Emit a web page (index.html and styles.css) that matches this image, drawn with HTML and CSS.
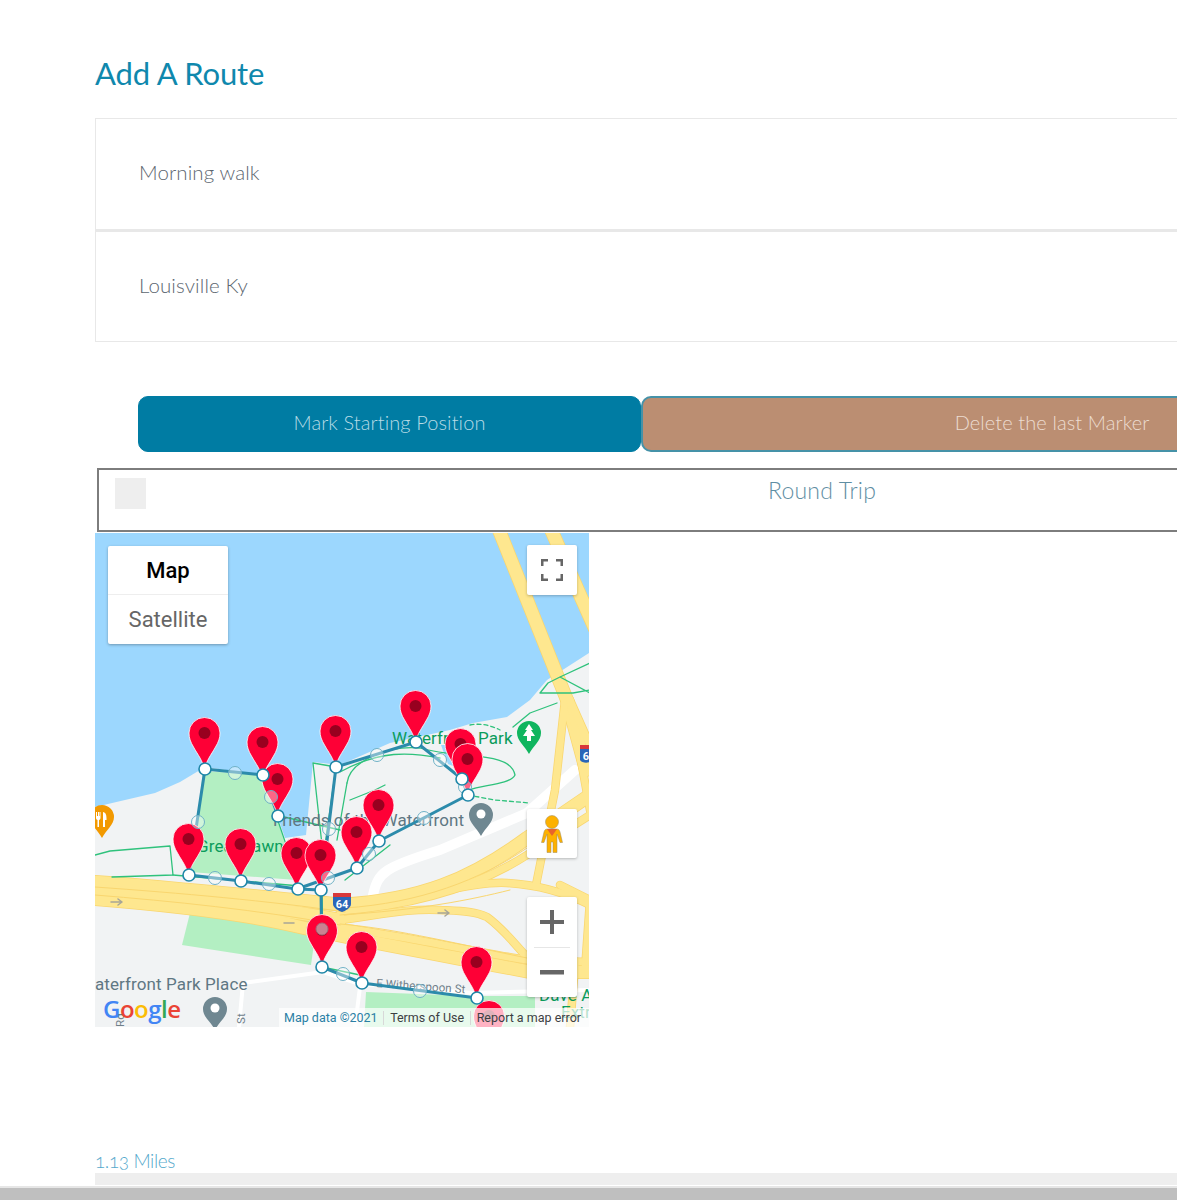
FILE: index.html
```html
<!DOCTYPE html>
<html lang="en">
<head>
<meta charset="utf-8">
<title>Add A Route</title>
<link rel="stylesheet" href="styles.css">
</head>
<body>
<main class="page">
  <h1 class="title">Add A Route</h1>
  <div class="fields">
    <div class="field">Morning walk</div>
    <div class="field">Louisville Ky</div>
  </div>
  <div class="actions">
    <button class="btn btn-start">Mark Starting Position</button>
    <button class="btn btn-delete">Delete the last Marker</button>
  </div>
  <div class="round">
    <span class="check"></span>
    <span class="round-label">Round Trip</span>
  </div>
  <div class="map">
    <svg class="map-canvas" viewBox="95 533 494 494" width="494" height="494">
      <defs>
        <g id="r13">
          <path d="M497 525L567 700L586 770"/>
          <path d="M549 525L600 640"/>
          <path d="M95 882C180 888 270 898 345 905"/>
          <path d="M95 891C170 897 260 905 340 920"/>
          <path d="M95 899C170 905 250 915 300 927C380 945 470 960 530 972L595 972"/>
          <path d="M340 905C420 900 470 880 527 838L590 795"/>
        </g>
        <g id="r7">
          <path d="M565 700L555 790L536 885"/>
          <path d="M570 700L590 810"/>
          <path d="M570 700L590 745"/>
          <path d="M340 911C420 905 480 885 527 855L590 815"/>
          <path d="M380 905C400 900 420 895 440 892C470 885 490 882 507 883C540 885 570 895 590 905"/>
          <path d="M340 920C380 915 410 908 440 910C460 911 475 911 487 917C505 930 515 945 527 957"/>
          <path d="M340 927C370 932 395 936 417 940C460 948 495 955 527 960L590 962"/>
          <path d="M560 885L590 900L585 970"/>
          <path d="M575 965L570 1027"/>
        </g>
        <path id="pin" d="M0 0C-2-10-6-14-11-23C-14-28-15.500-32-15.500-37A15.500 15.500 0 1 1 15.500-37C15.500-32 14-28 11-23C6-14 2-10 0 0Z"/>
        <g id="marker">
          <use href="#pin" class="pin-shape"/>
          <circle cy="-37" r="6" class="pin-dot"/>
        </g>
      </defs>

      <rect x="95" y="533" width="494" height="494" class="land"/>
      <path class="water" d="M95 533H589V653L547 680L530 700L507 717L473 723L450 730L390 743L340 765L313 762L306 835L285 838L272 800L262 775L205 767L180 782L155 793L95 807Z"/>
      <path class="water" d="M441 745L450 745L458 768L448 764Z"/>

      <path class="park" d="M203 771L262 775L275 812L296 880L190 872L197 822Z"/>
      <path class="park" d="M192 905L182 945L311 965L318 915Z"/>
      <path class="park" d="M366 992L472 996L535 996V1027H364Z"/>

      <path class="street-wide" d="M373 895C378 872 385 867 440 850L527 813L575 770"/>
      <path class="street" d="M243 983L323 972L360 984L473 993L589 990"/>
      <path class="street" d="M243 983L239 1027"/>
      <path class="street" d="M360 987L355 1027"/>

      <use href="#r13" class="edge-13"/>
      <use href="#r7" class="edge-7"/>
      <use href="#r13" class="road-13"/>
      <use href="#r7" class="road-7"/>
      <path class="road-line" d="M95 887C180 893 270 901 345 912M95 895C170 901 260 910 340 925M345 908C420 903 480 880 527 848M340 915C420 910 470 900 510 890M340 924C390 928 440 940 527 958"/>
      <path class="arrow" d="M111 902H121M118 899L122 902L118 905M438 913H448M445 910L449 913L445 916M284 923H294"/>

      <path class="trail" d="M95 855L110 851L170 846L173 875L112 877"/>
      <path class="trail" d="M173 875L300 886"/>
      <path class="trail" d="M275 812L298 880"/>
      <path class="trail" d="M313 763L336 767L325 845M313 763L322 845M347 783L337 840"/>
      <path class="trail" d="M347 783C350 760 390 745 420 748C460 760 510 750 515 775C510 785 480 785 470 790"/>
      <path class="trail" d="M340 772C380 750 410 752 440 758"/>
      <path class="trail" d="M513 727L530 713L557 703M540 693H573L590 690M540 693L548 683L560 677L590 693M560 677L590 663"/>
      <path class="trail" d="M322 890L323 967M322 967L360 975"/>
      <path class="trail-dash" d="M468 795L495 800L530 803"/>
      <path class="trail-dash" d="M470 725C480 723 490 725 500 730"/>
      <path class="trail" d="M345 880L390 845M280 816L340 830M350 800L375 790L385 785"/>

      <text x="392" y="744" class="label-green">Waterfront Park</text>
      <text x="197" y="852" class="label-green">Great Lawn</text>
      <text x="273" y="826" class="label-gray">Friends of the Waterfront</text>
      <text x="95" y="990" class="label-gray">aterfront Park Place</text>
      <text x="376" y="987" transform="rotate(4 376 987)" class="label-small">E Witherspoon St</text>
      <text x="539" y="1001" class="label-green">Dave A</text>
      <text x="561" y="1018" class="label-green">Extr</text>
      <text x="245" y="1024" transform="rotate(-90 245 1024)" class="label-small">St</text>
      <text x="124" y="1027" transform="rotate(-90 124 1027)" class="label-small">Rd</text>

      <g>
        <path d="M333 895H351V904C351 908 345 911 342 912C339 911 333 908 333 904Z" class="shield-blue"/>
        <path d="M333 893H351V897H333Z" class="shield-red"/>
        <text x="342" y="908" class="shield-text">64</text>
      </g>
      <g>
        <path d="M580 747H592V760C592 763 582 764 580 760Z" class="shield-blue"/>
        <path d="M580 745H592V749H580Z" class="shield-red"/>
        <text x="586" y="760" class="shield-text">6</text>
      </g>

      <path class="poi-green" d="M529 721A12 12 0 0 1 541 733C541 741 533 746 529 754C525 746 517 741 517 733A12 12 0 0 1 529 721Z"/>
      <path class="poi-icon" d="M529 724L533 730H531L535 736H531V741H527V736H523L527 730H525Z"/>
      <path class="poi-gray" d="M481 803A12 12 0 0 1 493 815C493 823 485 828 481 836C477 828 469 823 469 815A12 12 0 0 1 481 803Z"/>
      <circle cx="481" cy="814" r="4.500" class="poi-icon"/>
      <path class="poi-orange" d="M102 805A12 12 0 0 1 114 817C114 825 106 830 102 838C98 830 90 825 90 817A12 12 0 0 1 102 805Z"/>
      <path class="poi-icon" d="M96 812V818C96 819 97 820 97.500 820V827H99V820C99.500 820 100.500 819 100.500 818V812H99.500V816H99V812H98V816H97V812ZM103 812C105 812 106.500 814 106.500 818V820H105V827H103Z"/>
      <path class="poi-gray" d="M215 997A12 12 0 0 1 227 1009C227 1017 219 1022 215 1030C211 1022 203 1017 203 1009A12 12 0 0 1 215 997Z"/>
      <circle cx="215" cy="1008" r="4.500" class="poi-icon"/>

      <polyline class="route" points="263,775 205,769 189,875 241,881 297,889 357,868 379,841 468,795 462,779 416,742 336,767 321,890 322,967 362,983 477,998"/>
      <line class="route" x1="263" y1="775" x2="278" y2="816"/>
      <line class="route" x1="297" y1="889" x2="321" y2="890"/>

      <use href="#marker" x="277.500" y="816"/>
      <use href="#marker" x="460.500" y="781"/>
      <use href="#marker" x="489" y="1053"/>
      <use href="#marker" x="204.500" y="770"/>
      <use href="#marker" x="262.500" y="779"/>
      <use href="#marker" x="335.500" y="768"/>
      <use href="#marker" x="415.500" y="743"/>
      <use href="#marker" x="467.500" y="796"/>
      <use href="#marker" x="378.500" y="842"/>
      <use href="#marker" x="356.500" y="869"/>
      <use href="#marker" x="296.500" y="890"/>
      <use href="#marker" x="320.500" y="892"/>
      <use href="#marker" x="240.500" y="881"/>
      <use href="#marker" x="188.500" y="876"/>
      <use href="#marker" x="322" y="967"/>
      <use href="#marker" x="361.500" y="984"/>
      <use href="#marker" x="476.500" y="999"/>

      <g class="handles">
        <circle cx="235" cy="773" r="6.500"/><circle cx="198" cy="822" r="6.500"/><circle cx="215" cy="878" r="6.500"/>
        <circle cx="269" cy="884" r="6.500"/><circle cx="271" cy="797" r="6.500"/><circle cx="328" cy="878" r="6.500"/>
        <circle cx="369" cy="854" r="6.500"/><circle cx="424" cy="818" r="6.500"/><circle cx="465" cy="787" r="6.500"/>
        <circle cx="440" cy="760" r="6.500"/><circle cx="377" cy="755" r="6.500"/><circle cx="329" cy="829" r="6.500"/>
        <circle cx="322" cy="929" r="6" class="handle-top"/><circle cx="343" cy="974" r="6.500"/><circle cx="420" cy="991" r="6.500"/>
      </g>
      <g class="vertices">
        <circle cx="205" cy="769" r="6"/><circle cx="263" cy="775" r="6"/><circle cx="278" cy="816" r="6"/>
        <circle cx="336" cy="767" r="6"/><circle cx="416" cy="742" r="6"/><circle cx="462" cy="779" r="6"/>
        <circle cx="468" cy="795" r="6"/><circle cx="379" cy="841" r="6"/><circle cx="357" cy="868" r="6"/>
        <circle cx="321" cy="890" r="6"/><circle cx="298" cy="889" r="6"/><circle cx="241" cy="881" r="6"/>
        <circle cx="189" cy="875" r="6"/><circle cx="322" cy="967" r="6"/><circle cx="362" cy="983" r="6"/>
        <circle cx="477" cy="998" r="6"/>
      </g>

      <text x="103" y="1018" class="google"><tspan class="g-blue">G</tspan><tspan class="g-red">o</tspan><tspan class="g-yellow">o</tspan><tspan class="g-blue">g</tspan><tspan class="g-green">l</tspan><tspan class="g-red">e</tspan></text>
    </svg>

    <div class="map-type">
      <div class="map-type-item map-type-on">Map</div>
      <div class="map-type-item">Satellite</div>
    </div>
    <div class="ctl ctl-full">
      <svg viewBox="0 0 24 24" width="24" height="24"><path class="ctl-ico" d="M1 8V1H8V3.500H3.500V8ZM16 1H23V8H20.500V3.500H16ZM1 16H3.500V20.500H8V23H1ZM20.500 16H23V23H16V20.500H20.500Z"/></svg>
    </div>
    <div class="ctl ctl-peg">
      <svg viewBox="0 0 24 38" width="24" height="38">
        <circle cx="12" cy="7" r="6.500" class="peg"/>
        <path class="peg" d="M7.500 14H16.500C18.500 14 19.500 15 20 17L22.500 27.500H20L17 19V37.500H13V27H11V37.500H7V19L4 27.500H1.500L4 17C4.500 15 5.500 14 7.500 14Z"/>
        <path class="peg-collar" d="M7 14H17L12 21Z"/>
      </svg>
    </div>
    <div class="ctl ctl-zoom">
      <div class="zoom-btn"><svg viewBox="0 0 24 24" width="24" height="24"><path class="ctl-ico" d="M10 0H14V10H24V14H14V24H10V14H0V10H10Z"/></svg></div>
      <div class="zoom-sep"></div>
      <div class="zoom-btn"><svg viewBox="0 0 24 24" width="24" height="24"><rect y="10" width="24" height="4.500" class="ctl-ico"/></svg></div>
    </div>
    <div class="attrib">
      <span class="attrib-data">Map data ©2021</span>
      <span class="attrib-sep"></span>
      <span>Terms of Use</span>
      <span class="attrib-sep"></span>
      <span>Report a map error</span>
    </div>
  </div>
  <p class="miles">1.13 Miles</p>
  <div class="strip"></div>
</main>
<div class="scrollbar"></div>
</body>
</html>
```
FILE: styles.css
```css
html, body {
  margin: 0;
  height: 1200px;
  overflow: hidden;
  background: #fff;
}
body {
  font-family: "Lato", "Open Sans", sans-serif;
  font-weight: 300;
}
.page {
  width: 1600px;
  padding-left: 95px;
  box-sizing: border-box;
}
.title {
  margin: 0;
  padding-top: 55px;
  height: 63px;
  line-height: 36px;
  font-size: 31px;
  font-weight: 400;
  letter-spacing: -0.15px;
  color: #0f88ad;
}
.fields {
  display: flex;
  flex-direction: column;
}
.field {
  height: 112px;
  box-sizing: border-box;
  display: flex;
  align-items: center;
  padding: 0 0 4px 43px;
  border: 1px solid #e8e8e8;
  font-size: 20.500px;
  letter-spacing: 0.1px;
  color: #5c6670;
}
.field + .field {
  border-top: 2px solid #e8e8e8;
}
.actions {
  display: flex;
  margin: 54px 0 0 43px;
}
.btn {
  height: 56px;
  border-radius: 10px;
  font-family: inherit;
  font-weight: 300;
  font-size: 20px;
  letter-spacing: 0.1px;
  padding: 0 0 4px;
  color: #b7dbe6;
}
.btn-start {
  width: 503px;
  background: #007ca3;
  border: 1px solid #007ca3;
}
.btn-delete {
  width: 822px;
  background: #bb8e72;
  border: 2px solid #4592a8;
  color: #ecdcd0;
}
.round {
  position: relative;
  width: 1450px;
  height: 64px;
  margin: 16px 0 0 2px;
  box-sizing: border-box;
  border: 2px solid #7d7d7d;
  text-align: center;
}
.check {
  position: absolute;
  left: 16px;
  top: 8px;
  width: 31px;
  height: 31px;
  background: #eee;
}
.round-label {
  display: block;
  padding-top: 7px;
  font-size: 23px;
  letter-spacing: 0.2px;
  line-height: 26px;
  color: #5f8ea3;
}
.map {
  position: relative;
  width: 494px;
  height: 494px;
  margin-top: 1px;
  overflow: hidden;
  font-family: "Roboto", sans-serif;
  font-weight: 400;
}
.map-canvas {
  display: block;
}

/* map canvas */
.land { fill: #f1f3f4; }
.water { fill: #9cd7fe; }
.park { fill: #b3efc2; }
.edge-13, .edge-7, .road-13, .road-7, .road-line, .arrow, .street, .street-wide, .trail, .trail-dash, .route {
  fill: none;
  stroke-linecap: round;
  stroke-linejoin: round;
}
.edge-13 { stroke: #f9d66f; stroke-width: 14; }
.road-13 { stroke: #fee78f; stroke-width: 12.500; }
.edge-7 { stroke: #f9d66f; stroke-width: 8.500; }
.road-7 { stroke: #fee78f; stroke-width: 7; }
.road-line { stroke: #f9d66f; stroke-width: 1; }
.arrow { stroke: #a8a698; stroke-width: 1.500; }
.street { stroke: #fff; stroke-width: 4; }
.street-wide { stroke: #fff; stroke-width: 10; }
.trail { stroke: #2fc27c; stroke-width: 1.300; }
.trail-dash { stroke: #2fc27c; stroke-width: 1.300; stroke-dasharray: 4 3; }
.route { stroke: #2c8bab; stroke-width: 3; }
.label-green { font-size: 17px; letter-spacing: 0.1px; fill: #0b9c5c; }
.label-gray { font-size: 17px; letter-spacing: 0.1px; fill: #5f7783; }
.label-small { font-size: 11.500px; letter-spacing: 0.1px; fill: #70808a; }
.shield-blue { fill: #2a66b8; }
.shield-red { fill: #d9383a; }
.shield-text { font-size: 11px; font-weight: 700; fill: #fff; text-anchor: middle; }
.poi-green { fill: #10b55f; }
.poi-gray { fill: #6f8791; }
.poi-orange { fill: #f29900; }
.poi-icon { fill: #fff; }
.pin-shape { fill: #fe0036; stroke: #fff; stroke-width: 0.800; }
.pin-dot { fill: #98001f; }
.handles circle { fill: rgba(255, 255, 255, 0.4); stroke: #6fb1c6; stroke-width: 1; }
.handles .handle-top { fill: #c98291; stroke: #a86a7a; }
.vertices circle { fill: #fff; stroke: #1f87a8; stroke-width: 1.600; }
.google { font-family: "Open Sans", sans-serif; font-size: 24px; font-weight: 600; letter-spacing: -0.5px; }
.g-blue { fill: #4285f4; }
.g-red { fill: #ea4335; }
.g-yellow { fill: #fbbc05; }
.g-green { fill: #34a853; }

/* map controls */
.map-type {
  position: absolute;
  left: 13px;
  top: 13px;
  width: 120px;
  background: #fff;
  box-shadow: 0 1px 3px rgba(0, 0, 0, 0.3);
  border-radius: 2px;
}
.map-type-item {
  height: 49px;
  box-sizing: border-box;
  display: flex;
  align-items: center;
  justify-content: center;
  font-size: 22px;
  color: #666;
}
.map-type-on {
  font-weight: 500;
  color: #000;
  border-bottom: 1px solid #eee;
}
.ctl {
  position: absolute;
  left: 432px;
  width: 50px;
  background: #fff;
  border-radius: 2px;
  box-shadow: 0 1px 3px rgba(0, 0, 0, 0.25);
  display: flex;
  flex-direction: column;
  align-items: center;
  justify-content: center;
}
.ctl-full { top: 12px; height: 50px; }
.ctl-peg { top: 276px; height: 49px; }
.ctl-zoom { top: 364px; height: 100px; }
.zoom-btn {
  height: 49px;
  display: flex;
  align-items: center;
}
.zoom-sep {
  width: 36px;
  height: 1px;
  flex: none;
  background: #e6e6e6;
}
.ctl-ico { fill: #666; }
.peg { fill: #fdb100; stroke: #9c8a5c; stroke-width: 0.500; }
.peg-collar { fill: #e8642c; }
.attrib {
  position: absolute;
  right: 0;
  bottom: 0;
  width: 310px;
  height: 19px;
  box-sizing: border-box;
  padding: 0 8px 0 5px;
  display: flex;
  align-items: center;
  justify-content: space-between;
  background: rgba(255, 255, 255, 0.7);
  font-size: 12.500px;
  color: #3c4043;
}
.attrib-data { color: #2a7fa5; }
.attrib-sep { width: 1px; height: 14px; background: #d8d8d8; }

/* bottom */
.miles {
  margin: 121px 0 0;
  height: 26px;
  line-height: 26px;
  font-size: 19px;
  letter-spacing: -0.4px;
  font-variant-numeric: oldstyle-nums;
  color: #55a9cc;
}
.strip {
  margin-top: -1px;
  height: 12px;
  background: #eee;
}
.scrollbar {
  position: fixed;
  left: 0;
  right: 0;
  bottom: 0;
  height: 12px;
  background: #bfbfbf;
  border-top: 2px solid #e6e6e6;
}
```
